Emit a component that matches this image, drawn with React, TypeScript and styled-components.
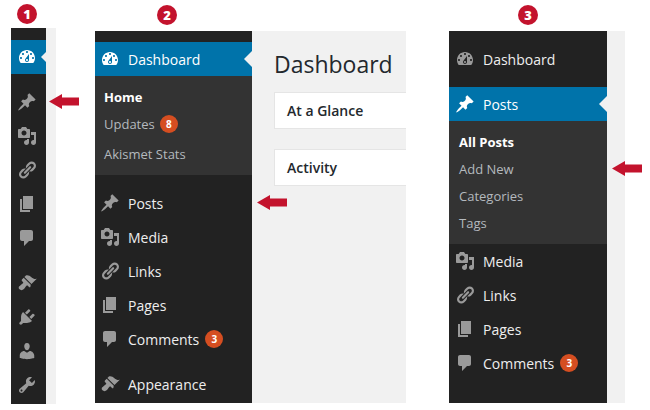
import styled, { createGlobalStyle } from 'styled-components';

const GlobalStyle = createGlobalStyle`
  html, body {
    margin: 0;
    background: #ffffff;
    font-family: 'Open Sans', 'Liberation Sans', sans-serif;
  }
`;

const ICONS: Record<string, string> = {
  dashboard:
    'M3.76 16h12.48c1.1-1.37 1.76-3.11 1.76-5 0-4.42-3.58-8-8-8s-8 3.58-8 8c0 1.89.66 3.63 1.76 5zM10 4c.55 0 1 .45 1 1s-.45 1-1 1-1-.45-1-1 .45-1 1-1zM6 6c.55 0 1 .45 1 1s-.45 1-1 1-1-.45-1-1 .45-1 1-1zm8 0c.55 0 1 .45 1 1s-.45 1-1 1-1-.45-1-1 .45-1 1-1zm-5.37 5.55L12 7v6c0 1.1-.9 2-2 2s-2-.9-2-2c0-.57.24-1.08.63-1.45zM4 10c.55 0 1 .45 1 1s-.45 1-1 1-1-.45-1-1 .45-1 1-1zm12 0c.55 0 1 .45 1 1s-.45 1-1 1-1-.45-1-1 .45-1 1-1zm-5 3c0-.55-.45-1-1-1s-1 .45-1 1 .45 1 1 1 1-.45 1-1z',
  posts:
    'M10.44 3.02l1.82-1.82 6.36 6.35-1.83 1.82c-1.05-.68-2.48-.57-3.41.36l-.75.75c-.92.93-1.04 2.35-.35 3.41l-1.83 1.82-2.41-2.41-2.8 2.79c-.42.42-3.38 2.71-3.8 2.29s1.86-3.39 2.28-3.81l2.79-2.79L4.1 9.36l1.83-1.82c1.05.69 2.48.57 3.4-.36l.75-.75c.93-.92 1.05-2.35.36-3.41z',
  media:
    'M13 11V4c0-.55-.45-1-1-1h-1.67L9 1H5L3.67 3H2c-.55 0-1 .45-1 1v7c0 .55.45 1 1 1h10c.55 0 1-.45 1-1zM7 4.5c1.38 0 2.5 1.12 2.5 2.5S8.38 9.5 7 9.5 4.5 8.38 4.5 7 5.62 4.5 7 4.5zM14 6h5v10.5c0 1.38-1.12 2.5-2.5 2.5S14 17.88 14 16.5s1.12-2.5 2.5-2.5c.17 0 .34.02.5.05V9h-3V6zm-4 8.05V13h2v3.5c0 1.38-1.12 2.5-2.5 2.5S7 17.88 7 16.5 8.12 14 9.5 14c.17 0 .34.02.5.05z',
  links:
    'M17.74 2.76c1.68 1.69 1.68 4.41 0 6.1l-1.53 1.52c-1.12 1.12-2.7 1.47-4.14 1.09l2.62-2.61.76-.77.76-.76c.84-.84.84-2.2 0-3.04-.84-.85-2.2-.85-3.04 0l-.77.76-3.38 3.38c-.37-1.44-.02-3.02 1.1-4.14l1.52-1.53c1.69-1.68 4.42-1.68 6.1 0zM8.59 13.43l5.34-5.34c.42-.42.42-1.1 0-1.52-.44-.43-1.13-.39-1.53 0l-5.33 5.34c-.42.42-.42 1.1 0 1.52.44.43 1.13.39 1.52 0zm-.76 2.29l4.14-4.15c.38 1.44.03 3.02-1.09 4.14l-1.52 1.53c-1.69 1.68-4.41 1.68-6.1 0-1.68-1.68-1.68-4.42 0-6.1l1.53-1.52c1.12-1.12 2.7-1.47 4.14-1.1l-4.14 4.15c-.85.84-.85 2.2 0 3.05.84.84 2.2.84 3.04 0z',
  pages: 'M6 15V2h10v13H6zm-1 1h8v2H3V5h2v11z',
  comments:
    'M5 2h9c1.1 0 2 .9 2 2v7c0 1.1-.9 2-2 2h-2l-5 5v-5H5c-1.1 0-2-.9-2-2V4c0-1.1.9-2 2-2z',
  appearance:
    'M14.48 11.06L7.41 3.99l1.5-1.5c.5-.56 2.3-.47 3.51.32 1.21.8 1.43 1.28 2.91 2.1 1.18.64 2.45 1.26 4.45.85zm-.71.71L6.7 4.7 4.93 6.47c-.39.39-.39 1.02 0 1.41l1.06 1.06c.39.39.39 1.03 0 1.42-.6.6-1.43 1.11-2.21 1.69-.35.26-.7.53-1.01.84C1.43 13.23 1.36 15.2 2.5 16.33c1.14 1.14 3.1 1.07 4.44-.27.31-.31.58-.66.84-1.01.58-.78 1.09-1.61 1.69-2.21.39-.39 1.02-.39 1.41 0l1.06 1.06c.39.39 1.02.39 1.41 0z',
  plugins:
    'M13.11 4.36L9.87 7.6 8 5.73l3.24-3.24c.35-.34 1.05-.2 1.56.32.52.51.66 1.21.31 1.55zm-8 1.77l.91-1.12 9.01 9.01-1.19.84c-.71.71-2.63 1.16-3.82 1.16H6.14L4.9 17.26c-.59.59-1.54.59-2.12 0-.59-.58-.59-1.53 0-2.12l1.24-1.24v-3.88c0-1.13.4-3.19 1.09-3.89zm7.26 3.97l3.24-3.24c.34-.35 1.04-.21 1.55.31.52.51.66 1.21.31 1.55l-3.24 3.25z',
  users:
    'M10 9.25c-2.27 0-2.73-3.44-2.73-3.44C7 4.02 7.82 2 9.97 2c2.16 0 2.98 2.02 2.71 3.81 0 0-.41 3.44-2.68 3.44zm0 2.57L12.72 10c2.39 0 4.52 2.33 4.52 4.53v2.49s-3.65 1.13-7.24 1.13c-3.65 0-7.24-1.13-7.24-1.13v-2.49c0-2.25 1.94-4.48 4.47-4.48z',
  tools:
    'M16.68 9.77c-1.34 1.34-3.3 1.67-4.95.99l-5.41 6.52c-.99.99-2.59.99-3.58 0s-.99-2.59 0-3.57l6.52-5.42c-.68-1.65-.35-3.61.99-4.95 1.28-1.28 3.12-1.62 4.72-1.06l-2.89 2.89 2.82 2.82 2.86-2.87c.53 1.58.18 3.39-1.08 4.65zM3.81 16.21c.4.39 1.04.39 1.43 0 .4-.4.4-1.04 0-1.43-.39-.4-1.03-.4-1.43 0-.39.39-.39 1.03 0 1.43z',
};

const Page = styled.div`
  display: flex;
  width: 650px;
  height: 410px;
  padding-left: 11px;
  box-sizing: border-box;
  overflow: hidden;
`;

const Panel = styled.section<{ $width: number; $left: number }>`
  display: flex;
  flex-direction: column;
  flex: none;
  width: ${p => p.$width}px;
  margin-left: ${p => p.$left}px;
`;

const StepBadge = styled.div<{ $left: number; $top: number; $bottom: number }>`
  width: 20px;
  height: 20px;
  margin: ${p => p.$top}px 0 ${p => p.$bottom}px ${p => p.$left}px;
  border-radius: 50%;
  background: #c3132d;
  color: #ffffff;
  font-size: 13px;
  font-weight: 800;
  line-height: 20px;
  text-align: center;
`;

const Frame = styled.div<{ $height: number }>`
  display: flex;
  height: ${p => p.$height}px;
  background: #f1f1f1;
`;

const Sidebar = styled.nav<{ $width: number; $top: number }>`
  flex: none;
  width: ${p => p.$width}px;
  padding-top: ${p => p.$top}px;
  box-sizing: border-box;
  background: #222222;
`;

const MenuRow = styled.div<{ $active?: boolean; $gap?: number; $iconLeft: number }>`
  position: relative;
  display: flex;
  align-items: center;
  height: 34px;
  margin-top: ${p => p.$gap ?? 0}px;
  padding-left: ${p => p.$iconLeft}px;
  background: ${p => (p.$active ? '#0073aa' : 'transparent')};
  color: #eeeeee;
  font-size: 14px;
`;

const MenuIcon = styled.svg<{ $active?: boolean }>`
  flex: none;
  width: 20px;
  height: 20px;
  fill: ${p => (p.$active ? '#ffffff' : '#9a9a9a')};
`;

const MenuLabel = styled.span<{ $active?: boolean }>`
  margin-left: 8px;
  color: ${p => (p.$active ? '#ffffff' : '#eeeeee')};
  white-space: nowrap;
`;

const ActiveNotch = styled.span<{ $size: number }>`
  position: absolute;
  top: 50%;
  right: 0;
  width: 0;
  height: 0;
  margin-top: -${p => p.$size}px;
  border: ${p => p.$size}px solid transparent;
  border-left-width: 0;
  border-right-color: #f1f1f1;
`;

const CountBadge = styled.span<{ $gap: number }>`
  display: inline-block;
  width: 18px;
  height: 18px;
  margin-left: ${p => p.$gap}px;
  border-radius: 50%;
  background: #d54e21;
  color: #ffffff;
  font-size: 10px;
  font-weight: 700;
  line-height: 18px;
  text-align: center;
`;

const SubMenu = styled.div`
  padding: 7px 0 8px;
  background: #333333;
`;

const SubRow = styled.div<{ $current?: boolean; $tall?: boolean; $left: number }>`
  position: relative;
  display: flex;
  align-items: center;
  height: 27px;
  margin-bottom: ${p => (p.$tall ? 3 : 0)}px;
  padding-left: ${p => p.$left}px;
  color: ${p => (p.$current ? '#ffffff' : '#b4b9be')};
  font-size: 13px;
  font-weight: ${p => (p.$current ? 700 : 400)};
`;

const PointerArrow = styled.svg<{ $left: number }>`
  position: absolute;
  top: 50%;
  left: ${p => p.$left}px;
  width: 30px;
  height: 15px;
  margin-top: -8px;
  fill: #c3132d;
`;

const Content = styled.main`
  flex: 1;
  min-width: 0;
  padding: 17px 0 0 22px;
  overflow: hidden;
`;

const Heading = styled.h1`
  margin: 0 0 12px;
  color: #23282d;
  font-size: 23px;
  font-weight: 400;
  line-height: 32px;
`;

const Card = styled.div`
  height: 37px;
  margin-bottom: 20px;
  padding-left: 12px;
  border: 1px solid #e5e5e5;
  border-right: 0;
  box-sizing: border-box;
  background: #ffffff;
  color: #23282d;
  font-size: 14px;
  font-weight: 600;
  line-height: 35px;
  white-space: nowrap;
`;

const Icon = ({ name, active }: { name: string; active?: boolean }) => (
  <MenuIcon viewBox="0 0 20 20" $active={active}>
    <path d={ICONS[name]} />
  </MenuIcon>
);

const Arrow = ({ left }: { left: number }) => (
  <PointerArrow viewBox="0 0 30 15" $left={left}>
    <polygon points="0,7.5 13,0 13,3.5 30,3.5 30,11.5 13,11.5 13,15" />
  </PointerArrow>
);

const App = () => {
  return (
    <Page>
      <GlobalStyle />

      <Panel $width={45} $left={0}>
        <StepBadge $left={6} $top={4} $bottom={4}>1</StepBadge>
        <Frame $height={376}>
          <Sidebar $width={35} $top={12}>
            <MenuRow $active $iconLeft={6}>
              <Icon name="dashboard" active />
              <ActiveNotch $size={5} />
            </MenuRow>
            <MenuRow $gap={11} $iconLeft={6}>
              <Icon name="posts" />
              <Arrow left={38} />
            </MenuRow>
            <MenuRow $iconLeft={6}><Icon name="media" /></MenuRow>
            <MenuRow $iconLeft={6}><Icon name="links" /></MenuRow>
            <MenuRow $iconLeft={6}><Icon name="pages" /></MenuRow>
            <MenuRow $iconLeft={6}><Icon name="comments" /></MenuRow>
            <MenuRow $gap={11} $iconLeft={6}><Icon name="appearance" /></MenuRow>
            <MenuRow $iconLeft={6}><Icon name="plugins" /></MenuRow>
            <MenuRow $iconLeft={6}><Icon name="users" /></MenuRow>
            <MenuRow $iconLeft={6}><Icon name="tools" /></MenuRow>
          </Sidebar>
        </Frame>
      </Panel>

      <Panel $width={311} $left={39}>
        <StepBadge $left={62} $top={5} $bottom={6}>2</StepBadge>
        <Frame $height={372}>
          <Sidebar $width={157} $top={11}>
            <MenuRow $active $iconLeft={5}>
              <Icon name="dashboard" active />
              <MenuLabel $active>Dashboard</MenuLabel>
              <ActiveNotch $size={8} />
            </MenuRow>
            <SubMenu>
              <SubRow $current $left={9}>Home</SubRow>
              <SubRow $tall $left={9}>Updates<CountBadge $gap={5}>8</CountBadge></SubRow>
              <SubRow $left={9}>Akismet Stats</SubRow>
            </SubMenu>
            <MenuRow $gap={11} $iconLeft={5}>
              <Icon name="posts" />
              <MenuLabel>Posts</MenuLabel>
              <Arrow left={162} />
            </MenuRow>
            <MenuRow $iconLeft={5}><Icon name="media" /><MenuLabel>Media</MenuLabel></MenuRow>
            <MenuRow $iconLeft={5}><Icon name="links" /><MenuLabel>Links</MenuLabel></MenuRow>
            <MenuRow $iconLeft={5}><Icon name="pages" /><MenuLabel>Pages</MenuLabel></MenuRow>
            <MenuRow $iconLeft={5}>
              <Icon name="comments" />
              <MenuLabel>Comments</MenuLabel>
              <CountBadge $gap={6}>3</CountBadge>
            </MenuRow>
            <MenuRow $gap={11} $iconLeft={5}><Icon name="appearance" /><MenuLabel>Appearance</MenuLabel></MenuRow>
          </Sidebar>
          <Content>
            <Heading>Dashboard</Heading>
            <Card>At a Glance</Card>
            <Card>Activity</Card>
          </Content>
        </Frame>
      </Panel>

      <Panel $width={176} $left={43}>
        <StepBadge $left={69} $top={5} $bottom={6}>3</StepBadge>
        <Frame $height={372}>
          <Sidebar $width={158} $top={11}>
            <MenuRow $iconLeft={6}><Icon name="dashboard" /><MenuLabel>Dashboard</MenuLabel></MenuRow>
            <MenuRow $active $gap={11} $iconLeft={6}>
              <Icon name="posts" active />
              <MenuLabel $active>Posts</MenuLabel>
              <ActiveNotch $size={8} />
            </MenuRow>
            <SubMenu>
              <SubRow $current $left={10}>All Posts</SubRow>
              <SubRow $left={10}>
                Add New
                <Arrow left={163} />
              </SubRow>
              <SubRow $left={10}>Categories</SubRow>
              <SubRow $left={10}>Tags</SubRow>
            </SubMenu>
            <MenuRow $iconLeft={6}><Icon name="media" /><MenuLabel>Media</MenuLabel></MenuRow>
            <MenuRow $iconLeft={6}><Icon name="links" /><MenuLabel>Links</MenuLabel></MenuRow>
            <MenuRow $iconLeft={6}><Icon name="pages" /><MenuLabel>Pages</MenuLabel></MenuRow>
            <MenuRow $iconLeft={6}>
              <Icon name="comments" />
              <MenuLabel>Comments</MenuLabel>
              <CountBadge $gap={6}>3</CountBadge>
            </MenuRow>
          </Sidebar>
        </Frame>
      </Panel>
    </Page>
  );
};

export default App;
